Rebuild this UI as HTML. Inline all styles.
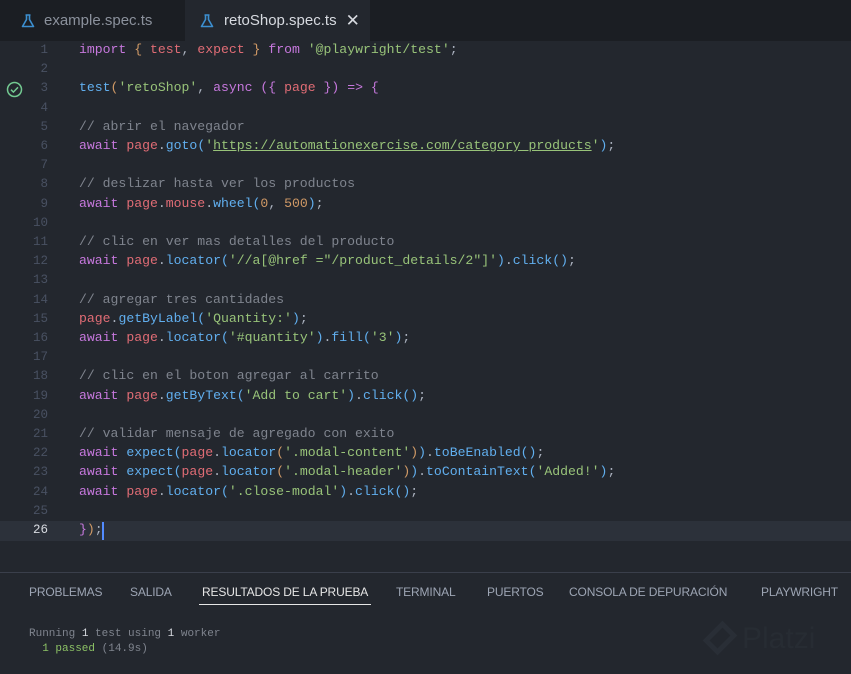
<!DOCTYPE html>
<html><head><meta charset="utf-8"><style>
*{margin:0;padding:0;box-sizing:border-box}
body{width:851px;height:674px;background:#23272e;overflow:hidden;position:relative;font-family:"Liberation Sans",sans-serif}
.tabs{position:absolute;left:0;top:0;width:851px;height:41px;background:#1b1e23}
.tab{position:absolute;top:0;height:41px;display:flex;align-items:center;font-size:15px;color:#8b919c}
.tab.active{background:#23272e;color:#d7dae0}
.ln{position:absolute;left:0;width:48px;text-align:right;font-family:"Liberation Mono",monospace;font-size:12.5px;color:#495162}
.line{position:absolute;left:79px;font-family:"Liberation Mono",monospace;font-size:13.15px;white-space:pre;color:#abb2bf}
.k{color:#c678dd}.v{color:#e06c75}.f{color:#61afef}.s{color:#98c379}.c{color:#7f848e}.y{color:#d19a66}.p{color:#c678dd}.b{color:#61afef}
.u{text-decoration:underline}
.ptabs{position:absolute;top:572px;left:0;width:851px;height:1px;background:#3a3f4b}
.pt{position:absolute;top:585px;font-size:12px;letter-spacing:-0.15px;color:#9da5b4}
.out{position:absolute;font-family:"Liberation Mono",monospace;font-size:11px;color:#7f848e;white-space:pre}
</style></head><body>
<div class="tabs">
 <div class="tab" style="left:0;width:185px;padding-left:20px">
  <svg width="16" height="16" viewBox="0 0 16 16" style="margin-right:8px"><path d="M5.5 2h5M6.5 2v4.5L2.5 13.5h11L9.5 6.5V2" fill="none" stroke="#3c8fd0" stroke-width="1.6" stroke-linejoin="round"/></svg>example.spec.ts</div>
 <div class="tab active" style="left:185px;width:185px;padding-left:14px">
  <svg width="16" height="16" viewBox="0 0 16 16" style="margin-right:9px"><path d="M5.5 2h5M6.5 2v4.5L2.5 13.5h11L9.5 6.5V2" fill="none" stroke="#3c8fd0" stroke-width="1.6" stroke-linejoin="round"/></svg>retoShop.spec.ts<span style="margin-left:9px;font-size:17px;color:#d7dae0">✕</span></div>
</div>
<div style="position:absolute;left:0;top:521px;width:851px;height:20px;background:#2c313a"></div>
<div style="position:absolute;left:102px;top:522px;width:2px;height:18px;background:#528bff"></div>
<svg style="position:absolute;left:6px;top:81px" width="17" height="17" viewBox="0 0 17 17"><circle cx="8.5" cy="8.5" r="7" fill="none" stroke="#73c991" stroke-width="1.5"/><path d="M5 8.7l2.4 2.4L12 6.3" fill="none" stroke="#73c991" stroke-width="1.5"/></svg>
<div id="code"></div>
<div class="ptabs"></div>
<div class="pt" style="left:29px">PROBLEMAS</div>
<div class="pt" style="left:130px">SALIDA</div>
<div class="pt" style="left:202px;color:#e6e6e6">RESULTADOS DE LA PRUEBA</div>
<div style="position:absolute;left:199px;top:604px;width:172px;height:1px;background:#e6e6e6"></div>
<div class="pt" style="left:396px">TERMINAL</div>
<div class="pt" style="left:487px">PUERTOS</div>
<div class="pt" style="left:569px">CONSOLA DE DEPURACIÓN</div>
<div class="pt" style="left:761px">PLAYWRIGHT</div>
<div class="out" style="left:29px;top:628px">Running <span style="color:#d7dae0">1</span> test using <span style="color:#d7dae0">1</span> worker</div>
<div class="out" style="left:29px;top:643px">  <span style="color:#8cc265">1 passed</span> (14.9s)</div>
<div style="position:absolute;left:705px;top:618px;width:30px;height:40px;border:7px solid #292e36;transform:rotate(45deg) scale(.7)"></div>
<div style="position:absolute;left:742px;top:622px;font-size:30px;color:#272c33">Platzi</div>
<script>
const L=[
'<span class="k">import</span> <span class="y">{</span> <span class="v">test</span>, <span class="v">expect</span> <span class="y">}</span> <span class="k">from</span> <span class="s">\'@playwright/test\'</span>;',
'',
'<span class="f">test</span><span class="y">(</span><span class="s">\'retoShop\'</span>, <span class="k">async</span> <span class="p">({</span> <span class="v">page</span> <span class="p">})</span> <span class="k">=&gt;</span> <span class="p">{</span>',
'',
'<span class="c">// abrir el navegador</span>',
'<span class="k">await</span> <span class="v">page</span>.<span class="f">goto</span><span class="b">(</span><span class="s">\'<span class="u">https://automationexercise.com/category_products</span>\'</span><span class="b">)</span>;',
'',
'<span class="c">// deslizar hasta ver los productos</span>',
'<span class="k">await</span> <span class="v">page</span>.<span class="v">mouse</span>.<span class="f">wheel</span><span class="b">(</span><span class="y">0</span>, <span class="y">500</span><span class="b">)</span>;',
'',
'<span class="c">// clic en ver mas detalles del producto</span>',
'<span class="k">await</span> <span class="v">page</span>.<span class="f">locator</span><span class="b">(</span><span class="s">\'//a[@href ="/product_details/2"]\'</span><span class="b">)</span>.<span class="f">click</span><span class="b">()</span>;',
'',
'<span class="c">// agregar tres cantidades</span>',
'<span class="v">page</span>.<span class="f">getByLabel</span><span class="b">(</span><span class="s">\'Quantity:\'</span><span class="b">)</span>;',
'<span class="k">await</span> <span class="v">page</span>.<span class="f">locator</span><span class="b">(</span><span class="s">\'#quantity\'</span><span class="b">)</span>.<span class="f">fill</span><span class="b">(</span><span class="s">\'3\'</span><span class="b">)</span>;',
'',
'<span class="c">// clic en el boton agregar al carrito</span>',
'<span class="k">await</span> <span class="v">page</span>.<span class="f">getByText</span><span class="b">(</span><span class="s">\'Add to cart\'</span><span class="b">)</span>.<span class="f">click</span><span class="b">()</span>;',
'',
'<span class="c">// validar mensaje de agregado con exito</span>',
'<span class="k">await</span> <span class="f">expect</span><span class="b">(</span><span class="v">page</span>.<span class="f">locator</span><span class="y">(</span><span class="s">\'.modal-content\'</span><span class="y">)</span><span class="b">)</span>.<span class="f">toBeEnabled</span><span class="b">()</span>;',
'<span class="k">await</span> <span class="f">expect</span><span class="b">(</span><span class="v">page</span>.<span class="f">locator</span><span class="y">(</span><span class="s">\'.modal-header\'</span><span class="y">)</span><span class="b">)</span>.<span class="f">toContainText</span><span class="b">(</span><span class="s">\'Added!\'</span><span class="b">)</span>;',
'<span class="k">await</span> <span class="v">page</span>.<span class="f">locator</span><span class="b">(</span><span class="s">\'.close-modal\'</span><span class="b">)</span>.<span class="f">click</span><span class="b">()</span>;',
'',
'<span class="p">}</span><span class="y">)</span>;'
];
let h='';
L.forEach((t,i)=>{const y=42+i*19.2;
h+=`<div class="ln" style="top:${y+1}px${i==25?';color:#d7dae0':''}">${i+1}</div><div class="line" style="top:${y}px">${t}</div>`;});
document.getElementById('code').innerHTML=h;
</script>
</body></html>
